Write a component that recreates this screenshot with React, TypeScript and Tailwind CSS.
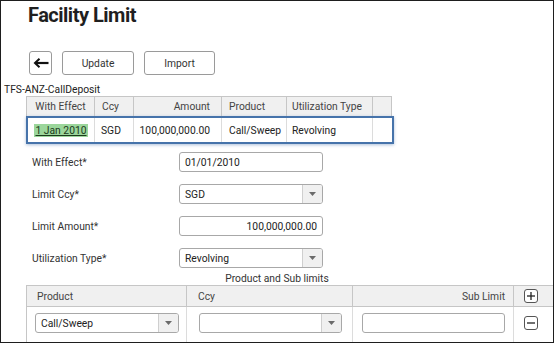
import React from "react";

const topCols = [
  { label: "With Effect", w: "w-[68px]", head: "justify-center", body: "justify-center" },
  { label: "Ccy", w: "w-[39px]", head: "justify-start pl-[7px]", body: "justify-start pl-[6px]" },
  { label: "Amount", w: "w-[88px]", head: "justify-end pr-[11px]", body: "justify-end pr-[11px]" },
  { label: "Product", w: "w-[65px]", head: "justify-start pl-[7px]", body: "justify-start pl-[7px]" },
  { label: "Utilization Type", w: "w-[86px]", head: "justify-start pl-[5px]", body: "justify-start pl-[5px]" },
  { label: "", w: "w-[18px]", head: "", body: "" },
];

function Caret() {
  return (
    <svg width="7" height="4" viewBox="0 0 7 4">
      <path d="M0 0 H7 L3.5 4 Z" fill="#6b6b6b" />
    </svg>
  );
}

function SelectBox({ value, width }: { value: string; width: string }) {
  return (
    <div className={`${width} h-[20px] flex border border-[#a8a8a8] rounded-[3px] overflow-hidden bg-white`}>
      <span className="flex-1 flex items-center pl-[5px] text-[#222]">{value}</span>
      <span className="w-[20px] flex items-center justify-center bg-[#f0f0f0] border-l border-[#cfcfcf]">
        <Caret />
      </span>
    </div>
  );
}

function TextBox({ value, right, width }: { value: string; right?: boolean; width: string }) {
  return (
    <div
      className={`${width} h-[20px] flex items-center border border-[#a8a8a8] rounded-[3px] bg-white text-[#222] ${
        right ? "justify-end pr-[5px]" : "pl-[5px]"
      }`}
    >
      {value}
    </div>
  );
}

function FormRow({ label, children }: { label: string; children: React.ReactNode }) {
  return (
    <div className="flex items-center h-[20px]">
      <span className="w-[178px] shrink-0 pl-[31px] text-[#333]">{label}</span>
      {children}
    </div>
  );
}

function SquareIcon({ minus }: { minus?: boolean }) {
  return (
    <svg width="14" height="14" viewBox="0 0 14 14">
      <rect x="0.5" y="0.5" width="13" height="13" rx="2.5" fill="white" stroke="#555" />
      <path d="M3 7 H11" stroke="#222" strokeWidth="1.3" />
      {!minus && <path d="M7 3 V11" stroke="#222" strokeWidth="1.3" />}
    </svg>
  );
}

export default function App() {
  return (
    <div className="w-[556px] h-[346px] bg-white">
      <div className="w-[554px] h-[343px] border border-[#1e1e1e] overflow-hidden font-['Roboto',sans-serif] text-[10.3px] leading-[13px] text-[#333]">
        <h1 className="pl-[27px] pt-[2px] font-['Roboto',sans-serif] text-[20px] leading-[24px] font-bold tracking-[-0.5px] text-[#1f1f1f]">
          Facility Limit
        </h1>

        <div className="flex items-center mt-[24px] pl-[28px] h-[24px]">
          <button className="w-[23px] h-[24px] flex items-center justify-center border border-[#9a9a9a] rounded-[3px] bg-white">
            <svg width="16" height="10" viewBox="0 0 16 10">
              <path d="M2 5 H15.5" stroke="#111" strokeWidth="2.2" />
              <path d="M6.5 0.8 L2 5 L6.5 9.2" stroke="#111" strokeWidth="2" fill="none" />
            </svg>
          </button>
          <button className="ml-[10px] w-[72px] h-[24px] border border-[#9a9a9a] rounded-[3px] bg-white text-[#333]">
            Update
          </button>
          <button className="ml-[10px] w-[71px] h-[24px] border border-[#9a9a9a] rounded-[3px] bg-white text-[#333]">
            Import
          </button>
        </div>

        <div className="mt-[8px] pl-[3px] text-[#222]">TFS-ANZ-CallDeposit</div>

        <div className="ml-[25px] w-[368px]">
          <div className="w-[366px] h-[21px] flex border border-[#c6c6c6] bg-[#f0f0f0] text-[#444]">
            {topCols.map((c, i) => (
              <div
                key={i}
                className={`${c.w} flex items-center ${c.head} ${i < topCols.length - 1 ? "border-r border-[#c6c6c6]" : ""}`}
              >
                {c.label}
              </div>
            ))}
          </div>
          <div className="-mt-[1px] w-[368px] h-[28px] flex border-2 border-[#4673aa] bg-white text-[#222] shadow-[0_1px_3px_rgba(70,115,170,0.45)]">
            <div className="w-[67px] flex items-center justify-center border-r border-[#dcdcdc]">
              <span className="bg-[#9bd69b] underline underline-offset-[1px] text-[#1c3a1c] px-[1px]">1 Jan 2010</span>
            </div>
            <div className="w-[39px] flex items-center pl-[6px] border-r border-[#dcdcdc]">SGD</div>
            <div className="w-[88px] flex items-center justify-end pr-[11px] border-r border-[#dcdcdc]">100,000,000.00</div>
            <div className="w-[65px] flex items-center pl-[7px] border-r border-[#dcdcdc]">Call/Sweep</div>
            <div className="w-[86px] flex items-center pl-[5px] border-r border-[#dcdcdc]">Revolving</div>
            <div className="flex-1" />
          </div>
        </div>

        <div className="mt-[8px] flex flex-col gap-[12px]">
          <FormRow label="With Effect*">
            <TextBox value="01/01/2010" width="w-[144px]" />
          </FormRow>
          <FormRow label="Limit Ccy*">
            <SelectBox value="SGD" width="w-[144px]" />
          </FormRow>
          <FormRow label="Limit Amount*">
            <TextBox value="100,000,000.00" right width="w-[144px]" />
          </FormRow>
          <FormRow label="Utilization Type*">
            <SelectBox value="Revolving" width="w-[144px]" />
          </FormRow>
        </div>

        <div className="mt-[4px] text-center text-[#333]">Product and Sub limits</div>

        <div className="ml-[25px]">
          <div className="h-[22px] flex border border-r-0 border-[#c6c6c6] bg-[#f0f0f0] text-[#444]">
            <div className="w-[160px] flex items-center pl-[10px] border-r border-[#c6c6c6]">Product</div>
            <div className="w-[166px] flex items-center pl-[11px] border-r border-[#c6c6c6]">Ccy</div>
            <div className="w-[161px] flex items-center justify-end pr-[8px] border-r border-[#c6c6c6]">Sub Limit</div>
            <div className="flex-1 flex items-center pl-[10px]">
              <SquareIcon />
            </div>
          </div>
          <div className="h-[40px] flex border-l border-[#c6c6c6]">
            <div className="w-[160px] pt-[6px] pl-[8px] border-r border-[#dcdcdc]">
              <SelectBox value="Call/Sweep" width="w-[144px]" />
            </div>
            <div className="w-[166px] pt-[6px] pl-[12px] border-r border-[#dcdcdc]">
              <SelectBox value="" width="w-[143px]" />
            </div>
            <div className="w-[161px] pt-[6px] pl-[9px] border-r border-[#dcdcdc]">
              <TextBox value="" width="w-[143px]" />
            </div>
            <div className="flex-1 pt-[9px] pl-[10px]">
              <SquareIcon minus />
            </div>
          </div>
        </div>
      </div>
    </div>
  );
}
